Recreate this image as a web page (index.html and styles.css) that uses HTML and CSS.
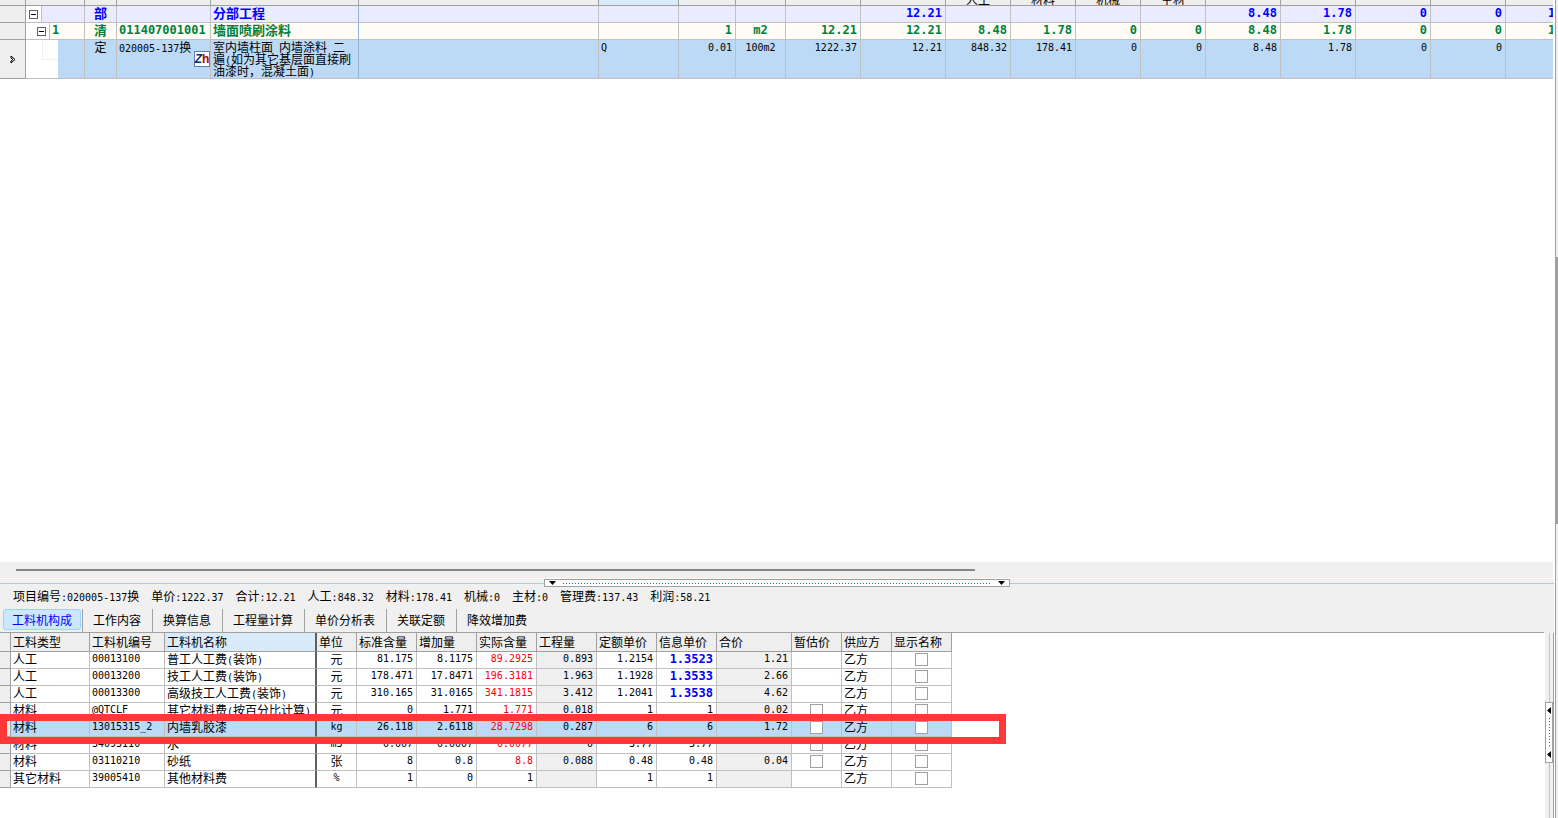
FILE: index.html
```html
<!DOCTYPE html>
<html lang="zh-CN">
<head>
<meta charset="utf-8">
<title>工料机构成</title>
<link rel="stylesheet" href="styles.css">
</head>
<body>
<div class="app">
  <main class="main">
    <section class="upper">
      <table class="grid budget">
        <colgroup>
          <col class="w26"><col class="w59"><col class="w32"><col class="w94"><col class="w148"><col class="w240"><col class="w80"><col class="w57"><col class="w50"><col class="w75"><col class="w85"><col class="w65"><col class="w65"><col class="w65"><col class="w65"><col class="w75"><col class="w75"><col class="w75"><col class="w75"><col class="w75">
        </colgroup>
        <thead>
          <tr><th></th><th></th><th></th><th></th><th></th><th></th><th class="hot"></th><th></th><th></th><th></th><th></th><th><div>人工</div></th><th><div>材料</div></th><th><div>机械</div></th><th><div>主材</div></th><th></th><th></th><th></th><th></th><th></th></tr>
        </thead>
        <tbody>
          <tr class="part">
            <td class="rowhead"></td>
            <td class="treecell"><div class="tree"><span class="indent d1"><button class="toggle" aria-label="折叠"></button></span></div></td>
            <td class="c">部</td><td></td><td class="frozen">分部工程</td><td></td><td></td><td></td><td></td><td></td><td class="n">12.21</td><td></td><td></td><td></td><td></td><td class="n">8.48</td><td class="n">1.78</td><td class="n">0</td><td class="n">0</td><td class="n">1.78</td>
          </tr>
          <tr class="list">
            <td class="rowhead"></td>
            <td class="treecell"><div class="tree"><span class="indent d2"><button class="toggle" aria-label="折叠"></button></span><span class="seq">1</span></div></td>
            <td class="c">清</td><td class="l">011407001001</td><td class="frozen">墙面喷刷涂料</td><td></td><td></td><td class="n">1</td><td class="n c">m2</td><td class="n">12.21</td><td class="n">12.21</td><td class="n">8.48</td><td class="n">1.78</td><td class="n">0</td><td class="n">0</td><td class="n">8.48</td><td class="n">1.78</td><td class="n">0</td><td class="n">0</td><td class="n">1.78</td>
          </tr>
          <tr class="quota">
            <td class="rowhead"><svg class="marker" viewBox="0 0 6 9" width="6" height="9"><path d="M1 1v2l2 1.500L1 6v2l4-3.500z" fill="#fff" stroke="#000"/></svg></td>
            <td class="treecell"><div class="tree"><span class="indent d3"></span></div></td>
            <td class="c">定</td><td class="code"><span class="m">020005-137</span>换<span class="zh"><b>Z</b><b>h</b></span></td><td class="frozen wrap">室内墙柱面<span class="m"> </span>内墙涂料<span class="m"> </span>二<br>遍<span class="m">(</span>如为其它基层面直接刷<br>油漆时，混凝土面<span class="m">)</span></td><td></td><td class="l">Q</td><td class="n">0.01</td><td class="n c">100m2</td><td class="n">1222.37</td><td class="n">12.21</td><td class="n">848.32</td><td class="n">178.41</td><td class="n">0</td><td class="n">0</td><td class="n">8.48</td><td class="n">1.78</td><td class="n">0</td><td class="n">0</td><td></td>
          </tr>
        </tbody>
      </table>
    </section>
    <div class="hscroll"><div class="thumb"></div></div>
    <div class="splitter">
      <div class="handle"><svg width="7" height="4" viewBox="0 0 7 4"><path d="M0 0h7L3.500 4z"/></svg><i class="dots"></i><svg width="7" height="4" viewBox="0 0 7 4"><path d="M0 0h7L3.500 4z"/></svg></div>
    </div>
    <div class="info">
      <span>项目编号<span class="m">:020005-137</span>换</span><span>单价<span class="m">:1222.37</span></span><span>合计<span class="m">:12.21</span></span><span>人工<span class="m">:848.32</span></span><span>材料<span class="m">:178.41</span></span><span>机械<span class="m">:0</span></span><span>主材<span class="m">:0</span></span><span>管理费<span class="m">:137.43</span></span><span>利润<span class="m">:58.21</span></span>
    </div>
    <nav class="tabs">
      <button class="tab active">工料机构成</button><button class="tab">工作内容</button><button class="tab">换算信息</button><button class="tab">工程量计算</button><button class="tab">单价分析表</button><button class="tab">关联定额</button><button class="tab">降效增加费</button>
    </nav>
    <section class="lower">
      <div class="detail">
        <table class="grid res">
          <colgroup><col class="w11"><col class="w79"><col class="w75"><col class="w152"><col class="w40"><col class="w60"><col class="w60"><col class="w60"><col class="w60"><col class="w60"><col class="w60"><col class="w75"><col class="w50"><col class="w50"><col class="w60"></colgroup>
          <thead><tr><th></th><th>工料类型</th><th>工料机编号</th><th class="thick hot">工料机名称</th><th>单位</th><th>标准含量</th><th>增加量</th><th>实际含量</th><th>工程量</th><th>定额单价</th><th>信息单价</th><th>合价</th><th>暂估价</th><th>供应方</th><th>显示名称</th></tr></thead>
          <tbody>
            <tr><td class="rowhead"></td><td>人工</td><td class="l">00013100</td><td class="thick">普工人工费<span class="m">(</span>装饰<span class="m">)</span></td><td class="c">元</td><td class="n">81.175</td><td class="n">8.1175</td><td class="n red">89.2925</td><td class="n ro">0.893</td><td class="n">1.2154</td><td class="n blue">1.3523</td><td class="n ro">1.21</td><td></td><td>乙方</td><td class="c"><input type="checkbox" aria-label="显示名称"></td></tr>
            <tr><td class="rowhead"></td><td>人工</td><td class="l">00013200</td><td class="thick">技工人工费<span class="m">(</span>装饰<span class="m">)</span></td><td class="c">元</td><td class="n">178.471</td><td class="n">17.8471</td><td class="n red">196.3181</td><td class="n ro">1.963</td><td class="n">1.1928</td><td class="n blue">1.3533</td><td class="n ro">2.66</td><td></td><td>乙方</td><td class="c"><input type="checkbox" aria-label="显示名称"></td></tr>
            <tr><td class="rowhead"></td><td>人工</td><td class="l">00013300</td><td class="thick">高级技工人工费<span class="m">(</span>装饰<span class="m">)</span></td><td class="c">元</td><td class="n">310.165</td><td class="n">31.0165</td><td class="n red">341.1815</td><td class="n ro">3.412</td><td class="n">1.2041</td><td class="n blue">1.3538</td><td class="n ro">4.62</td><td></td><td>乙方</td><td class="c"><input type="checkbox" aria-label="显示名称"></td></tr>
            <tr><td class="rowhead"></td><td>材料</td><td class="l">@QTCLF</td><td class="thick">其它材料费<span class="m">(</span>按百分比计算<span class="m">)</span></td><td class="c">元</td><td class="n">0</td><td class="n">1.771</td><td class="n red">1.771</td><td class="n ro">0.018</td><td class="n">1</td><td class="n">1</td><td class="n ro">0.02</td><td class="c"><input type="checkbox" aria-label="暂估价"></td><td>乙方</td><td class="c"><input type="checkbox" aria-label="显示名称"></td></tr>
            <tr class="sel"><td class="rowhead"><svg class="marker" viewBox="0 0 6 9" width="6" height="9"><path d="M1 1v2l2 1.500L1 6v2l4-3.500z" fill="#fff" stroke="#000"/></svg></td><td>材料</td><td class="l">13015315_2</td><td class="thick">内墙乳胶漆</td><td class="n c">kg</td><td class="n">26.118</td><td class="n">2.6118</td><td class="n red">28.7298</td><td class="n ro">0.287</td><td class="n">6</td><td class="n">6</td><td class="n ro">1.72</td><td class="c"><input type="checkbox" aria-label="暂估价"></td><td>乙方</td><td class="c"><input type="checkbox" aria-label="显示名称"></td></tr>
            <tr><td class="rowhead"></td><td>材料</td><td class="l">34093110</td><td class="thick">水</td><td class="n c">m3</td><td class="n">0.007</td><td class="n">0.0007</td><td class="n red">0.0077</td><td class="n ro">0</td><td class="n">3.77</td><td class="n">3.77</td><td class="n ro"></td><td class="c"><input type="checkbox" aria-label="暂估价"></td><td>乙方</td><td class="c"><input type="checkbox" aria-label="显示名称"></td></tr>
            <tr><td class="rowhead"></td><td>材料</td><td class="l">03110210</td><td class="thick">砂纸</td><td class="c">张</td><td class="n">8</td><td class="n">0.8</td><td class="n red">8.8</td><td class="n ro">0.088</td><td class="n">0.48</td><td class="n">0.48</td><td class="n ro">0.04</td><td class="c"><input type="checkbox" aria-label="暂估价"></td><td>乙方</td><td class="c"><input type="checkbox" aria-label="显示名称"></td></tr>
            <tr><td class="rowhead"></td><td>其它材料</td><td class="l">39005410</td><td class="thick">其他材料费</td><td class="n c">%</td><td class="n">1</td><td class="n">0</td><td class="n">1</td><td class="n ro"></td><td class="n">1</td><td class="n">1</td><td class="n ro"></td><td></td><td>乙方</td><td class="c"><input type="checkbox" aria-label="显示名称"></td></tr>
          </tbody>
        </table>
        <div class="callout"></div>
      </div>
      <div class="vsplit">
        <div class="vhandle"><svg width="4" height="7" viewBox="0 0 4 7"><path d="M4 0v7L0 3.500z"/></svg><i class="vdots"></i><svg width="4" height="7" viewBox="0 0 4 7"><path d="M4 0v7L0 3.500z"/></svg></div>
      </div>
    </section>
  </main>
  <aside class="edge"><div class="edgethumb"></div></aside>
</div>
</body>
</html>
```

FILE: styles.css
```css
* { box-sizing: border-box; }
body {
  margin: 0;
  background: #fff;
  color: #000;
  font: 12px/16px "Noto Sans CJK SC", sans-serif;
}
button { font: inherit; color: inherit; padding: 0; border: 0; background: none; }
.app { display: flex; height: 100vh; overflow: hidden; }
.main { flex: 1; min-width: 0; margin-right: 1px; display: flex; flex-direction: column; }
.upper { flex: 1; min-height: 0; overflow: hidden; margin-right: 1px; }

.grid { table-layout: fixed; border-collapse: separate; border-spacing: 0; width: 0; }
.grid th, .grid td {
  padding: 0 2px;
  border-right: 1px solid #c0c0c0;
  border-bottom: 1px solid #c0c0c0;
  white-space: nowrap;
  overflow: hidden;
  vertical-align: top;
  text-align: left;
}
.grid th { background: #eee; border-color: #a0a0a0; font-weight: normal; }
.grid th.hot { background: #d9ebf9; }
.grid td.rowhead { background: #eee; border-color: #a0a0a0; padding: 0; }
.grid td.c { text-align: center; }
.m, .grid td.n, .grid td.l { font-family: "DejaVu Sans Mono", monospace; font-size: 10px; }
.m { line-height: 0; white-space: pre; }
.grid td.n { text-align: right; padding-right: 3px; }
.grid td.n.c { text-align: center; padding: 0; }

.w11 { width: 11px; } .w26 { width: 26px; } .w32 { width: 32px; } .w40 { width: 40px; }
.w50 { width: 50px; } .w57 { width: 57px; } .w59 { width: 59px; } .w60 { width: 60px; }
.w65 { width: 65px; } .w75 { width: 75px; } .w79 { width: 79px; } .w80 { width: 80px; }
.w85 { width: 85px; } .w94 { width: 94px; } .w148 { width: 148px; } .w152 { width: 152px; }
.w240 { width: 240px; }

.budget th { height: 6px; line-height: 5px; }
.budget th div { height: 5px; display: flex; align-items: flex-end; justify-content: center; line-height: 10px; }
.budget td { height: 17px; line-height: 14px; }
.budget .frozen { border-right-color: #8fb4d4; }
.part td { background: #ebebff; color: #00f; font-size: 13px; font-weight: bold; }
.list td { background: #fffcf5; color: #008040; font-size: 13px; font-weight: bold; }
.grid .part td.n, .grid .list td.n, .grid .list td.l { font-size: 12px; }
.quota td { background: #bcdaf6; }
.grid .quota td { height: 39px; }
.grid .quota td.n, .grid .quota td.l { line-height: 16px; }
.grid .quota td.rowhead { vertical-align: middle; text-align: center; }
.marker { display: block; margin: 0 auto; }
.grid .quota td.wrap { line-height: 12px; padding-top: 1px; }
.quota .code { position: relative; }
.zh {
  position: absolute; right: 0; top: 11px; width: 16px; height: 16px;
  background: #fff; border: 1px solid #5b7fb5;
  font: 12px/14px "Liberation Sans", sans-serif; display: flex; justify-content: center;
}
.zh b:first-child { color: #003080; font-style: italic; }
.zh b:last-child { color: #b00000; }

.grid td.treecell { padding: 0; }
.tree { display: flex; height: 16px; }
.quota .tree { height: 38px; }
.indent {
  display: flex; justify-content: flex-end; align-items: center;
  background: #fff; border-right: 1px solid #c0c0c0; padding-right: 3px;
}
.d1 { width: 16px; }
.d2 { width: 24px; }
.d3 { width: 32px; border-right: 0; background: linear-gradient(#eee, #eee) 16px 0 / 1px 20px no-repeat, linear-gradient(#eee, #eee) 16px 19px / 16px 1px no-repeat, #fff; }
.toggle {
  width: 9px; height: 9px; border: 1px solid #606060;
  background: linear-gradient(#000, #000) center / 5px 1px no-repeat #fff;
}
.seq { padding-left: 2px; font: bold 12px/14px "DejaVu Sans Mono", monospace; }

.hscroll { height: 16px; margin-right: 1px; padding: 7px 0 0 16px; background: #f0f0f0; }
.thumb { width: 62.400%; height: 2px; background: #858585; }
.splitter {
  height: 9px; display: flex; justify-content: center; align-items: flex-end; border-top: 1px solid #fff;
  background: linear-gradient(#a8c8f0, #a8c8f0) 0 4px / 100% 1px no-repeat #f0f0f0;
}
.handle {
  width: 30%; height: 8px; padding: 0 4px; display: flex; align-items: center; gap: 7px;
  background: #fff; border: 1px solid #a0a0a0;
}
.dots { flex: 1; height: 1px; background: repeating-linear-gradient(90deg, #0078d7 0 1px, transparent 1px 3px); }
.info { background: #f0f0f0; display: flex; gap: 12px; padding: 1px 13px 5px; white-space: nowrap; }
.tabs {
  display: flex; height: 24px; padding-left: 3px;
  background: linear-gradient(#a0a0a0, #a0a0a0) 0 100% / calc(100% - 10px) 1px no-repeat #f0f0f0;
}
.tab { height: 23px; padding: 0 11px 2px 10px; border-left: 1px solid #a0a0a0; }
.tab.active {
  height: 21px; padding: 0 8px; margin-right: 1px; border: 1px solid #99d1ff; border-radius: 3px;
  background: #cce8ff; color: #00f;
}

.lower { display: flex; }
.detail { flex: 1; position: relative; padding-bottom: 30px; }
.res th { height: 19px; line-height: 18px; padding: 0 2px; }
.res td { height: 17px; line-height: 14px; }
.grid .thick { border-right: 2px solid #606060; }
.res .red { color: #f00; }
.grid td.n.blue { color: #00f; font-weight: bold; font-size: 12px; }
.res .ro { background: #f0f0f0; }
.res .sel td { background: #bcdaf6; }
.grid .sel td.rowhead { background: #eee; vertical-align: middle; }
.res input {
  appearance: none; display: block; width: 13px; height: 13px; margin: 1px auto 0;
  background: #fff; border: 1px solid #a0a0a0;
}
.callout { position: absolute; left: 0; top: 81px; width: 1006px; height: 30px; border: 7px solid #fc3937; }
.vsplit {
  width: 9px; display: flex; align-items: center; border-right: 1px solid #a0a0a0;
  background: linear-gradient(#a8c8f0, #a8c8f0) 4px 0 / 1px 100% no-repeat #f0f0f0;
}
.vhandle {
  width: 8px; height: 61px; padding: 4px 0; margin-top: 14px; flex: none;
  display: flex; flex-direction: column; align-items: center; gap: 4px;
  background: #fff; border: 1px solid #a0a0a0;
}
.vhandle svg { flex: none; }
.vdots { flex: 1; width: 1px; background: repeating-linear-gradient(#0078d7 0 1px, transparent 1px 3px); }
.edge { width: 3px; background: #f0f0f0; border-left: 1px solid #a0a0a0; display: flex; flex-direction: column; }
.edgethumb { margin-top: 257px; height: 267px; border: 1px solid #a0a0a0; }
```
